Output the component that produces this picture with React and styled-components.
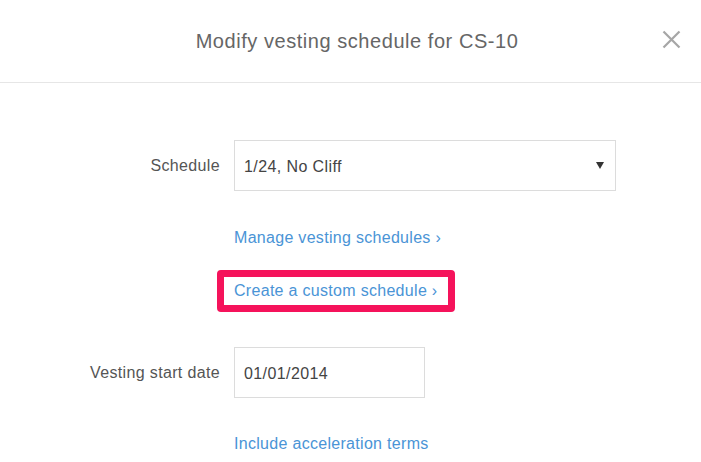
import React from "react";
import styled, { createGlobalStyle } from "styled-components";

const Global = createGlobalStyle`
  html, body { margin: 0; padding: 0; background: #fff; }
  body { font-family: "Liberation Sans", Arial, sans-serif; }
`;

const Modal = styled.div`
  width: 701px;
  height: 462px;
  overflow: hidden;
  background: #fff;
`;

const Header = styled.div`
  position: relative;
  height: 82px;
  border-bottom: 1px solid #e6e6e6;
  display: flex;
  align-items: center;
  justify-content: center;
  padding-left: 13px;
`;

const Title = styled.h2`
  margin: 0;
  font-size: 20px;
  font-weight: 400;
  color: #666;
  letter-spacing: 0.55px;
`;

const Close = styled.button`
  position: absolute;
  right: 19px;
  top: 29px;
  width: 21px;
  height: 21px;
  padding: 0;
  border: 0;
  background: none;
  display: flex;
  align-items: center;
  justify-content: center;
`;

const Form = styled.div`
  padding-top: 57px;
  display: flex;
  flex-direction: column;
`;

const Row = styled.div`
  display: flex;
  align-items: ${(p) => (p.$center ? "center" : "flex-start")};
  margin-top: ${(p) => p.$mt || 0}px;
`;

const Label = styled.div`
  width: 234px;
  padding-right: 14px;
  box-sizing: border-box;
  text-align: right;
  font-size: 16px;
  letter-spacing: 0.35px;
  color: #555;
`;

const Field = styled.div`
  box-sizing: border-box;
  width: ${(p) => p.$w}px;
  height: ${(p) => p.$h}px;
  border: 1px solid #dcdcdc;
  display: flex;
  align-items: center;
  justify-content: space-between;
  padding: 2px 10px 0 9px;
  font-size: 16px;
  letter-spacing: 0.4px;
  color: #444;
`;

const Arrow = styled.span`
  width: 0;
  height: 0;
  border-left: 4px solid transparent;
  border-right: 4px solid transparent;
  border-top: 7px solid #333;
  margin: 0 1px 3px 0;
`;

const Link = styled.a`
  font-size: 16px;
  color: #4a94d6;
  text-decoration: none;
  line-height: 18px;
  letter-spacing: 0.3px;
`;

const Highlight = styled.div`
  display: inline-flex;
  align-items: center;
  height: 42px;
  box-sizing: border-box;
  border: 7px solid #f5135b;
  border-radius: 4px;
  padding: 0 0 0 10px;
  margin-left: -17px;
  width: 238px;
`;

export default function App() {
  return (
    <Modal>
      <Global />
      <Header>
        <Title>Modify vesting schedule for CS-10</Title>
        <Close aria-label="Close">
          <svg width="19" height="19" viewBox="0 0 19 19">
            <path d="M1.5 1.5 L17.5 17.5 M17.5 1.5 L1.5 17.5" stroke="#a6a6a6" strokeWidth="2.2" fill="none" />
          </svg>
        </Close>
      </Header>
      <Form>
        <Row $center>
          <Label>Schedule</Label>
          <Field $w={382} $h={51}>
            <span>1/24, No Cliff</span>
            <Arrow />
          </Field>
        </Row>
        <Row $mt={38}>
          <Label />
          <Link href="#">Manage vesting schedules ›</Link>
        </Row>
        <Row $mt={23}>
          <Label />
          <Highlight>
            <Link href="#">Create a custom schedule ›</Link>
          </Highlight>
        </Row>
        <Row $center $mt={35}>
          <Label>Vesting start date</Label>
          <Field $w={191} $h={51}>
            <span>01/01/2014</span>
          </Field>
        </Row>
        <Row $mt={37}>
          <Label />
          <Link href="#">Include acceleration terms</Link>
        </Row>
      </Form>
    </Modal>
  );
}
